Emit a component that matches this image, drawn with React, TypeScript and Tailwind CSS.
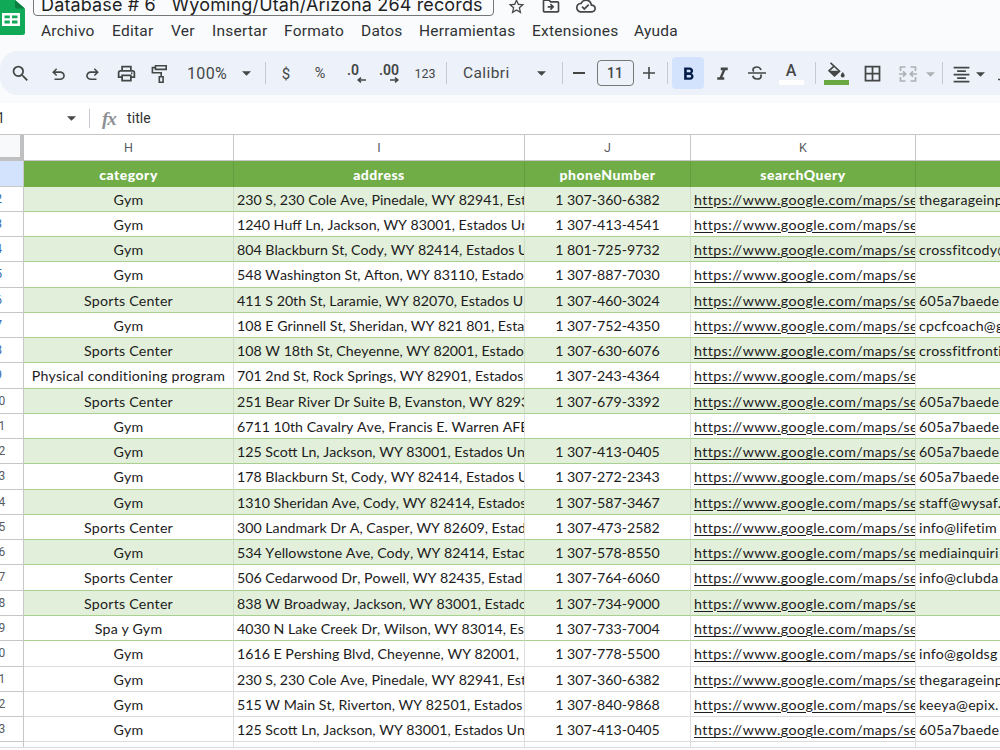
import React from 'react';
import {
  MdSearch,
  MdFormatBold,
  MdFormatItalic,
  MdFormatAlignCenter,
  MdBorderAll,
  MdStarBorder,
  MdOutlineDriveFileMove,
  MdOutlineCloudDone,
} from 'react-icons/md';

const menus = [
  { label: 'Archivo', className: 'w-[71px]' },
  { label: 'Editar', className: 'w-[59px]' },
  { label: 'Ver', className: 'w-[41px]' },
  { label: 'Insertar', className: 'w-[72px]' },
  { label: 'Formato', className: 'w-[77px]' },
  { label: 'Datos', className: 'w-[58px]' },
  { label: 'Herramientas', className: 'w-[113px]' },
  { label: 'Extensiones', className: 'w-[102px]' },
  { label: 'Ayuda', className: 'w-[60px]' },
];

const rows = [
  { id: 2, category: 'Gym', address: '230 S, 230 Cole Ave, Pinedale, WY 82941, Est', phone: '1 307-360-6382', email: 'thegarageinp' },
  { id: 3, category: 'Gym', address: '1240 Huff Ln, Jackson, WY 83001, Estados Un', phone: '1 307-413-4541', email: '' },
  { id: 4, category: 'Gym', address: '804 Blackburn St, Cody, WY 82414, Estados U', phone: '1 801-725-9732', email: 'crossfitcody@' },
  { id: 5, category: 'Gym', address: '548 Washington St, Afton, WY 83110, Estado', phone: '1 307-887-7030', email: '' },
  { id: 6, category: 'Sports Center', address: '411 S 20th St, Laramie, WY 82070, Estados U', phone: '1 307-460-3024', email: '605a7baede' },
  { id: 7, category: 'Gym', address: '108 E Grinnell St, Sheridan, WY 821 801, Esta', phone: '1 307-752-4350', email: 'cpcfcoach@g' },
  { id: 8, category: 'Sports Center', address: '108 W 18th St, Cheyenne, WY 82001, Estado', phone: '1 307-630-6076', email: 'crossfitfronti' },
  { id: 9, category: 'Physical conditioning program', address: '701 2nd St, Rock Springs, WY 82901, Estados', phone: '1 307-243-4364', email: '' },
  { id: 10, category: 'Sports Center', address: '251 Bear River Dr Suite B, Evanston, WY 8293', phone: '1 307-679-3392', email: '605a7baede' },
  { id: 11, category: 'Gym', address: '6711 10th Cavalry Ave, Francis E. Warren AFB', phone: '', email: '605a7baede' },
  { id: 12, category: 'Gym', address: '125 Scott Ln, Jackson, WY 83001, Estados Un', phone: '1 307-413-0405', email: '605a7baede' },
  { id: 13, category: 'Gym', address: '178 Blackburn St, Cody, WY 82414, Estados U', phone: '1 307-272-2343', email: '605a7baede' },
  { id: 14, category: 'Gym', address: '1310 Sheridan Ave, Cody, WY 82414, Estados', phone: '1 307-587-3467', email: 'staff@wysaf.' },
  { id: 15, category: 'Sports Center', address: '300 Landmark Dr A, Casper, WY 82609, Estad', phone: '1 307-473-2582', email: 'info@lifetim' },
  { id: 16, category: 'Gym', address: '534 Yellowstone Ave, Cody, WY 82414, Estad', phone: '1 307-578-8550', email: 'mediainquiri' },
  { id: 17, category: 'Sports Center', address: '506 Cedarwood Dr, Powell, WY 82435, Estad', phone: '1 307-764-6060', email: 'info@clubda' },
  { id: 18, category: 'Sports Center', address: '838 W Broadway, Jackson, WY 83001, Estado', phone: '1 307-734-9000', email: '' },
  { id: 19, category: 'Spa y Gym', address: '4030 N Lake Creek Dr, Wilson, WY 83014, Est', phone: '1 307-733-7004', email: '' },
  { id: 20, category: 'Gym', address: '1616 E Pershing Blvd, Cheyenne, WY 82001,', phone: '1 307-778-5500', email: 'info@goldsg' },
  { id: 21, category: 'Gym', address: '230 S, 230 Cole Ave, Pinedale, WY 82941, Est', phone: '1 307-360-6382', email: 'thegarageinp' },
  { id: 22, category: 'Gym', address: '515 W Main St, Riverton, WY 82501, Estados', phone: '1 307-840-9868', email: 'keeya@epix.' },
  { id: 23, category: 'Gym', address: '125 Scott Ln, Jackson, WY 83001, Estados Un', phone: '1 307-413-0405', email: '605a7baede' },
];

const Cell = ({ className, children }: { className: string; children?: React.ReactNode }) => (
  <div className={`flex h-full shrink-0 items-center justify-center ${className}`}>{children}</div>
);

const Divider = ({ className }: { className: string }) => (
  <Cell className={className}>
    <div className="h-[22px] w-px shrink-0 bg-[#c7cad0]" />
  </Cell>
);

const Caret = ({ className = 'text-[#444746]' }: { className?: string }) => (
  <svg viewBox="0 0 10 5" className={`h-[5px] w-[9px] shrink-0 ${className}`}>
    <path d="M0 0h10L5 5z" fill="currentColor" />
  </svg>
);

const Symbol = ({ d, className = 'size-[19px]' }: { d: string; className?: string }) => (
  <svg viewBox="0 -960 960 960" className={`shrink-0 ${className}`}>
    <path d={d} fill="currentColor" />
  </svg>
);

const SheetsLogo = () => (
  <svg viewBox="0 0 25 36" className="h-9 w-[25px] shrink-0">
    <path d="M0 0h15l10 9v23.5a2.5 2.5 0 0 1-2.5 2.5H0z" fill="#0fa958" />
    <path d="M15 0l10 8.5H17a2 2 0 0 1-2-2z" fill="#0b7d40" />
    <path d="M2 13h18v13H2zM4.500 15.500v2.700h5.300v-2.700zm7.500 0v2.700h5.500v-2.700zM4.500 20.600v2.900h5.300v-2.900zm7.500 0v2.900h5.500v-2.900z" fill="#fff" fillRule="evenodd" />
  </svg>
);

const DecimalIcon = ({ text, right }: { text: string; right?: boolean }) => (
  <div className="flex shrink-0 flex-col items-end">
    <span className="text-[14px] leading-[13px] font-semibold">{text}</span>
    <svg viewBox="0 0 9 6" className={`h-[6px] w-[9px] ${right ? '' : '-mr-[7px]'}`}>
      <path
        d={right ? 'M0 3h7.500M5 .6 7.800 3 5 5.400' : 'M9 3H1.500M4 .6 1.200 3 4 5.400'}
        fill="none"
        stroke="currentColor"
        strokeWidth="1.600"
      />
    </svg>
  </div>
);

const Header = () => (
  <div className="flex h-[51px] w-full">
    <div className="w-[33px] shrink-0">
      <SheetsLogo />
    </div>
    <div className="flex flex-col">
      <div className="flex h-4 items-end text-[#444746]">
        <div className="-mt-4 flex h-8 w-[461px] shrink-0 items-end rounded-[4px] border border-[#747775] pl-[7px]">
          <span className="mb-[-2px] font-['Inter'] text-[18px] leading-6 tracking-[0.14px] whitespace-pre text-[#1f1f1f]">
            Database # 6{'   '}Wyoming/Utah/Arizona 264 records
          </span>
        </div>
        <MdStarBorder className="ml-[13px] size-[19px] shrink-0" />
        <MdOutlineDriveFileMove className="ml-[15px] size-5 shrink-0" />
        <MdOutlineCloudDone className="ml-[15px] size-5 shrink-0" />
      </div>
      <div className="flex h-[30px] items-center pt-px pl-2 text-[15.500px] tracking-[0.25px] text-[#303234]">
        {menus.map((menu) => (
          <div key={menu.label} className={`shrink-0 ${menu.className}`}>
            {menu.label}
          </div>
        ))}
      </div>
    </div>
  </div>
);

const Toolbar = () => (
  <div className="flex h-11 w-[1040px] shrink-0 items-center rounded-l-[18px] bg-[#edf2fa] text-[#444746]">
    <Cell className="w-10 pt-px"><MdSearch className="size-[21px]" /></Cell>
    <Cell className="w-9 pt-[3px]">
      <Symbol d="M280-200v-80h284q63 0 109.500-40T720-420q0-60-46.500-100T564-560H312l104 104-56 56-200-200 200-200 56 56-104 104h252q97 0 167 63t70 157q0 94-70 157t-167 63H280Z" />
    </Cell>
    <Cell className="w-8 pt-[3px]">
      <Symbol d="M396-200q-97 0-167-63t-70-157q0-94 70-157t167-63h252L544-744l56-56 200 200-200 200-56-56 104-104H396q-63 0-109.500 40T240-420q0 60 46.500 100T396-280h284v80H396Z" />
    </Cell>
    <Cell className="w-9 pt-px">
      <Symbol
        className="size-[21px]"
        d="M640-640v-120H320v120h-80v-200h480v200h-80Zm-480 80h640-640Zm560 100q17 0 28.500-11.500T760-500q0-17-11.500-28.500T720-540q-17 0-28.500 11.500T680-500q0 17 11.500 28.500T720-460Zm-80 260v-160H320v160h320Zm80 80H240v-160H80v-240q0-51 35-85.500t85-34.500h560q51 0 85.500 34.500T880-520v240H720v160Zm80-240v-160q0-17-11.500-28.500T760-560H200q-17 0-28.500 11.500T160-520v160h80v-80h480v80h80Z"
      />
    </Cell>
    <Cell className="w-8 pt-[2px]">
      <svg viewBox="0 0 18 20" className="h-5 w-[18px] shrink-0" fill="none" stroke="currentColor" strokeWidth="1.600">
        <path d="M4.500 1.800h10.700v3.600H4.500zM4.500 3.600H1.400v5.200h8.800v3.800M8.300 12.700h3.800v5.600H8.300z" />
      </svg>
    </Cell>
    <Cell className="w-[62px] pt-[2px] text-[16px] tracking-[0.300px]">100%</Cell>
    <Cell className="w-4 pt-px"><Caret /></Cell>
    <Divider className="w-[22px]" />
    <Cell className="w-5 pt-[2px] text-[15px]">$</Cell>
    <Cell className="w-12 pt-[2px] text-[14.500px]">%</Cell>
    <Cell className="w-[18px]"><DecimalIcon text=".0" /></Cell>
    <Cell className="w-[54px]"><DecimalIcon text=".00" right /></Cell>
    <Cell className="w-[18px] pt-[2px] text-[12.500px]">123</Cell>
    <Divider className="w-6" />
    <div className="w-[68px] shrink-0 pt-[2px] pl-[5px] text-[15.500px] tracking-[0.400px]">Calibri</div>
    <Cell className="w-[30px]"><Caret /></Cell>
    <Divider className="w-3" />
    <Cell className="w-[22px]"><div className="h-[2px] w-3 bg-[#444746]" /></Cell>
    <Cell className="w-[50px]">
      <div className="flex h-[26px] w-[37px] items-center justify-center rounded-[4px] border border-[#747775] pt-px text-[14px] font-medium">11</div>
    </Cell>
    <Cell className="w-[17px]">
      <svg viewBox="0 0 12 12" className="size-3 shrink-0" stroke="currentColor" strokeWidth="1.600">
        <path d="M6 0v12M0 6h12" />
      </svg>
    </Cell>
    <Divider className="ml-[5px] w-[10px]" />
    <div className="flex h-8 w-8 shrink-0 items-center justify-center rounded-[4px] bg-[#d3e3fd] pt-[2px] text-[#041e49]">
      <MdFormatBold className="size-[21px]" />
    </div>
    <Cell className="w-9 pt-[2px]"><MdFormatItalic className="size-[21px]" /></Cell>
    <Cell className="w-[34px]">
      <svg viewBox="0 0 18 14" className="h-[14px] w-[18px] shrink-0" fill="none" stroke="currentColor" strokeWidth="1.700">
        <path d="M0 7h18M13 4C12.300 2 11 1 9 1 6.500 1 5 2.300 5 3.800c0 .8.300 1.300.800 1.700M4.800 9.800c.5 2.100 2 3.200 4.200 3.200 2.500 0 4.100-1.200 4.100-3.100 0-.6-.2-1-.5-1.400" />
      </svg>
    </Cell>
    <Cell className="w-[34px] flex-col pt-[2px]">
      <span className="text-[16px] leading-[15px] font-medium">A</span>
      <div className="mt-[2px] h-[5px] w-[25px] bg-white" />
    </Cell>
    <Divider className="w-[14px]" />
    <Cell className="w-7 flex-col">
      <svg viewBox="0 0 18 17" className="h-[17px] w-[18px] shrink-0">
        <path d="M3.500.8 12.600 9.200 7.500 14 2 8.800 7.300 3.800" fill="none" stroke="currentColor" strokeWidth="1.600" />
        <path d="M2 8.800h10.800L7.500 14.200zM15.700 10s-2 2.300-2 3.500a2 2 0 0 0 4 0c0-1.200-2-3.500-2-3.500z" fill="currentColor" />
      </svg>
      <div className="mt-px h-[5px] w-[25px] bg-[#6aa842]" />
    </Cell>
    <Cell className="w-11 pt-px"><MdBorderAll className="size-[21px]" /></Cell>
    <Cell className="w-7 pt-[2px] text-[#adb0b5]">
      <svg viewBox="0 0 18 16" className="h-4 w-[18px] shrink-0" fill="none" stroke="currentColor" strokeWidth="1.700">
        <path d="M6.500 1H1.500v4M11.500 1h5v4M1.500 11v4h5M16.500 11v4h-5M0 8h6.500M4 5.300 6.700 8 4 10.700M18 8h-6.500M14 5.300 11.300 8l2.700 2.700" />
      </svg>
    </Cell>
    <Cell className="w-[17px] pt-[2px]"><Caret className="text-[#adb0b5]" /></Cell>
    <Divider className="w-[7px]" />
    <Cell className="w-[30px] pt-[2px]"><MdFormatAlignCenter className="size-[21px]" /></Cell>
    <Cell className="w-2 pt-[2px]"><Caret /></Cell>
    <svg viewBox="0 0 12 18" className="ml-[14px] h-[18px] w-3 shrink-0">
      <path d="M0 15.500h6M3 0v13" stroke="currentColor" strokeWidth="1.600" />
    </svg>
  </div>
);

const FormulaBar = () => (
  <div className="flex h-[31px] shrink-0 items-center bg-white text-[#303234]">
    <div className="w-[67px] shrink-0 overflow-hidden">
      <div className="-ml-[3px] text-[14px]">1</div>
    </div>
    <Caret />
    <div className="ml-[13px] h-[19px] w-px bg-[#c7cad0]" />
    <span className="ml-[12px] w-[25px] font-['Liberation_Serif'] text-[19px] leading-5 font-bold tracking-[-1px] text-[#8d9094] italic">fx</span>
    <span className="text-[14px] tracking-[0.100px]">title</span>
  </div>
);

const ColumnHeaders = () => (
  <div className="flex h-[27px] shrink-0 border-t border-[#c7c7c7] bg-white text-center text-[12.500px] leading-[25px] text-[#575b5f]">
    <div className="w-6 shrink-0 border-r-4 border-b-4 border-[#c0c0c0] bg-[#f8f9fa]" />
    <div className="w-[210px] shrink-0 border-r border-b border-[#c7c7c7]">H</div>
    <div className="w-[291px] shrink-0 border-r border-b border-[#c7c7c7]">I</div>
    <div className="w-[166px] shrink-0 border-r border-b border-[#c7c7c7]">J</div>
    <div className="w-[225px] shrink-0 border-r border-b border-[#c7c7c7]">K</div>
    <div className="grow border-b border-[#c7c7c7]" />
  </div>
);

const titleCell = 'shrink-0 border-r border-[#659c40]';

const TitleRow = () => (
  <div className="flex h-[25.500px] shrink-0 bg-[#70ad47] text-center font-['Lato'] text-[14px] leading-[27px] font-black tracking-[0.500px] text-white">
    <div className="w-6 shrink-0 border-r border-b border-[#c7c7c7] bg-[#d3e3fd]" />
    <div className={`w-[210px] ${titleCell}`}>category</div>
    <div className={`w-[291px] ${titleCell}`}>address</div>
    <div className={`w-[166px] ${titleCell}`}>phoneNumber</div>
    <div className={`w-[225px] ${titleCell}`}>searchQuery</div>
    <div className="grow" />
  </div>
);

const DataRow = ({ row }: { row: (typeof rows)[number] }) => {
  const banded = row.id <= 18 && row.id % 2 === 0;
  const line = row.id <= 19 ? 'border-b-[#a9d08e]' : 'border-b-[#dcdcdc]';
  const side = banded ? 'border-r border-r-[#cfdcc8]' : 'border-r border-r-[#dedede]';
  const cell = `shrink-0 overflow-hidden border-b whitespace-nowrap ${line} ${side}`;

  return (
    <div className={`flex h-[25.270px] shrink-0 font-['Lato'] text-[14.200px] leading-[26px] text-[#1c1c1c] ${banded ? 'bg-[#e2efda]' : 'bg-white'}`}>
      <div className="w-6 shrink-0 overflow-hidden border-r border-b border-[#c7c7c7] bg-white">
        <div className={`-ml-[27px] w-[51px] text-center font-['Roboto'] text-[12px] leading-[25px] ${row.id < 10 ? 'text-[#3768ad]' : 'text-[#575b5f]'}`}>
          {row.id}
        </div>
      </div>
      <div className={`w-[210px] text-center tracking-[0.240px] ${cell}`}>{row.category}</div>
      <div className={`w-[291px] pl-[3px] [font-kerning:none] ${cell}`}>{row.address}</div>
      <div className={`w-[166px] text-center ${cell}`}>{row.phone}</div>
      <div className={`w-[225px] pl-[3px] tracking-[0.420px] underline underline-offset-2 ${cell}`}>https://www.google.com/maps/se</div>
      <div className={`grow basis-0 overflow-hidden border-b pl-[3px] tracking-[0.240px] whitespace-nowrap ${line}`}>{row.email}</div>
    </div>
  );
};

const App = () => {
  return (
    <div className="flex h-[750px] w-[1000px] flex-col overflow-hidden bg-[#f9fbfd] font-['Roboto',sans-serif]">
      <Header />
      <Toolbar />
      <div className="h-2 shrink-0" />
      <FormulaBar />
      <div className="flex w-full shrink-0 flex-col">
        <ColumnHeaders />
        <TitleRow />
        {rows.map((row) => (
          <DataRow key={row.id} row={row} />
        ))}
      </div>
      <div className="flex h-[6px] shrink-0 border-b border-[#dcdcdc] bg-white">
        <div className="w-6 shrink-0 border-r border-[#c7c7c7]" />
        <div className="w-[210px] shrink-0 border-r border-[#dedede]" />
        <div className="w-[291px] shrink-0 border-r border-[#dedede]" />
        <div className="w-[166px] shrink-0 border-r border-[#dedede]" />
        <div className="w-[225px] shrink-0 border-r border-[#dedede]" />
      </div>
    </div>
  );
};

export default App;
